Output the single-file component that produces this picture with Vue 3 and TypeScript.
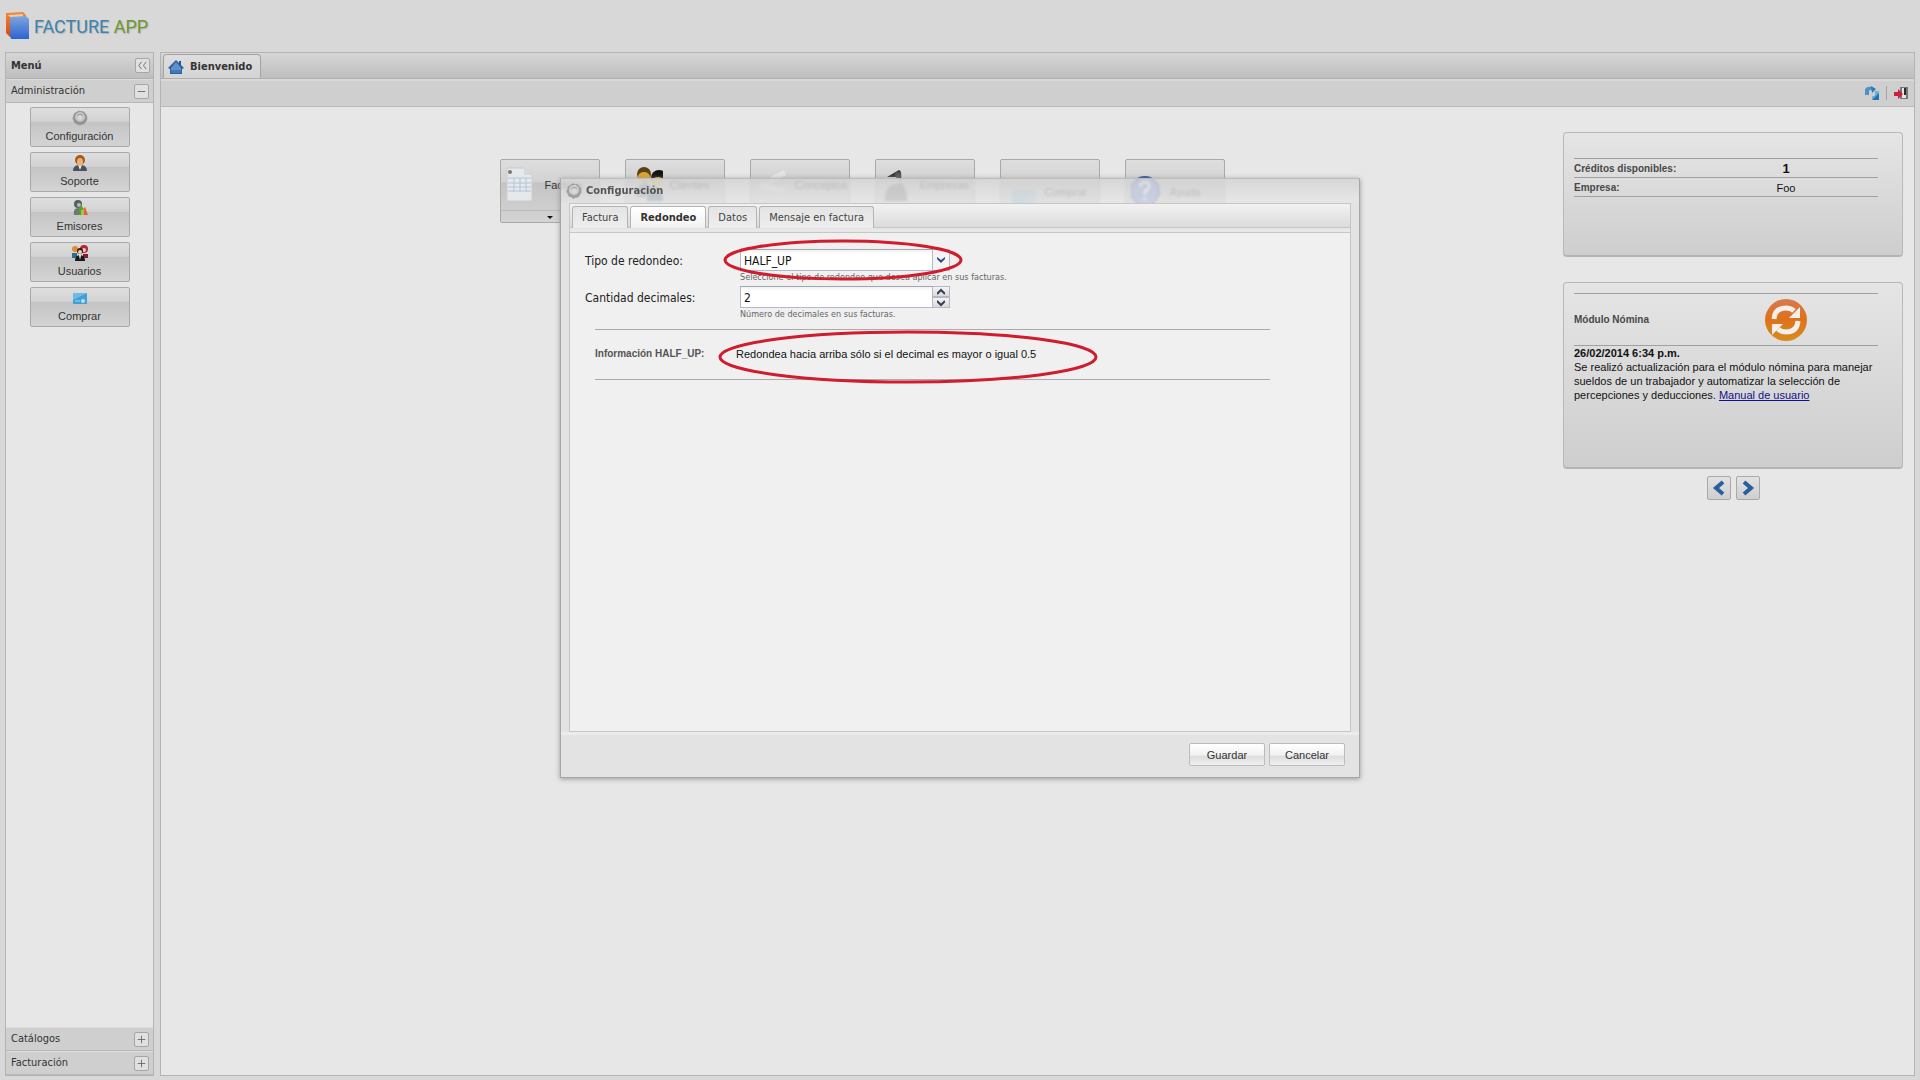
<script setup lang="ts">
import { ref } from 'vue'

interface MenuEntry { id: string; label: string }

const menu: MenuEntry[] = [
  { id: 'gear', label: 'Configuración' },
  { id: 'support', label: 'Soporte' },
  { id: 'issuer', label: 'Emisores' },
  { id: 'users', label: 'Usuarios' },
  { id: 'card', label: 'Comprar' },
]

const collapsed: string[] = ['Catálogos', 'Facturación']

const launchers: MenuEntry[] = [
  { id: 'invoice', label: 'Factura' },
  { id: 'clients', label: 'Clientes' },
  { id: 'concepts', label: 'Conceptos' },
  { id: 'company', label: 'Empresas' },
  { id: 'buy', label: 'Comprar' },
  { id: 'help', label: 'Ayuda' },
]

const tabs: string[] = ['Factura', 'Redondeo', 'Datos', 'Mensaje en factura']
const activeTab = ref<string>('Redondeo')
const rounding = ref<string>('HALF_UP')
const decimals = ref<number>(2)
</script>

<template>
  <div class="app">
    <header class="brand">
      <svg class="brand-mark" viewBox="0 0 24 30" aria-hidden="true">
        <defs>
          <linearGradient id="lo" x1="0" y1="0" x2="0" y2="1"><stop offset="0" stop-color="#f08a3c" /><stop offset="1" stop-color="#d8440e" /></linearGradient>
          <linearGradient id="lb" x1="0" y1="0" x2="0" y2="1"><stop offset="0" stop-color="#7fa6dc" /><stop offset="1" stop-color="#2d63d2" /></linearGradient>
        </defs>
        <path d="M0 2 L17 1 L20 4 L20 24 L4 26 L0 22 Z" fill="url(#lo)" />
        <path d="M2 4 L17 3 L17 6 L4 6 Z" fill="#f6c9a4" />
        <path d="M4 6 L20 5 L23 8 L23 28 L5 28 L4 24 Z" fill="url(#lb)" />
      </svg>
      <span class="brand-name"><span class="brand-a">FACTURE</span> <span class="brand-b">APP</span></span>
    </header>

    <div class="columns">
      <aside class="sidebar">
        <div class="side-head">
          <strong>Menú</strong>
          <button class="tool" aria-label="Contraer menú">
            <svg viewBox="0 0 14 14"><path d="M6 3 L3 7 L6 11 M11 3 L8 7 L11 11" /></svg>
          </button>
        </div>
        <div class="accordion">
          <span>Administración</span>
          <button class="tool" aria-label="Contraer Administración"><svg viewBox="0 0 14 14"><path d="M3 7 H11" /></svg></button>
        </div>
        <nav class="side-body">
          <button v-for="m in menu" :key="m.id" class="side-btn">
            <svg viewBox="0 0 16 16" aria-hidden="true">
              <g v-if="m.id === 'gear'">
                <circle cx="8" cy="8" r="5" fill="none" stroke="#929292" stroke-width="4" />
                <circle cx="8" cy="8" r="7" fill="none" stroke="#a2a2a2" stroke-width="1" stroke-dasharray="3 2" />
                <circle cx="8" cy="7" r="4" fill="none" stroke="#c6c6c6" stroke-width="2" />
              </g>
              <g v-else-if="m.id === 'support'">
                <path d="M1 16 Q1 11 6 10 L10 10 Q15 11 15 16 Z" fill="#4d4f5c" />
                <path d="M6 10 L8 15 L10 10 Z" fill="#f1e6da" />
                <circle cx="8" cy="5" r="5" fill="#a35a22" />
                <ellipse cx="8" cy="7" rx="3" ry="4" fill="#e9b183" />
              </g>
              <g v-else-if="m.id === 'issuer'">
                <circle cx="6" cy="4" r="4" fill="#56605f" />
                <path d="M2 15 Q1 8 6 8 Q11 8 11 15 Z" fill="#6d7775" />
                <circle cx="7" cy="5" r="2" fill="#b9bfbd" />
                <path d="M7 7 L9 5 L11 8 L11 15 L7 15 Z" fill="#4ca32b" />
                <path d="M11 9 L13 7 L16 15 L11 15 Z" fill="#e0603c" />
                <path d="M9 10 L12 9 L12 15 L9 15 Z" fill="#a8c43b" />
              </g>
              <g v-else-if="m.id === 'users'">
                <circle cx="3" cy="4" r="3" fill="#e58a2d" />
                <circle cx="12" cy="4" r="4" fill="#b5243a" />
                <circle cx="12" cy="5" r="2" fill="#f1c9ac" />
                <path d="M0 13 V8 H5 V13 Z" fill="#2b6f8f" />
                <path d="M11 13 V9 H16 V13 Z" fill="#7a2233" />
                <circle cx="8" cy="6" r="3" fill="#2a1b14" />
                <circle cx="8" cy="7" r="2" fill="#f3cfae" />
                <path d="M3 16 Q3 10 8 10 Q13 10 13 16 Z" fill="#17181b" />
                <path d="M7 10 H9 L8 15 Z" fill="#fff" />
              </g>
              <g v-else>
                <rect x="1" y="3" width="14" height="11" rx="1" fill="#3f9fd6" />
                <path d="M1 3 H15 L1 10 Z" fill="#6fbbe4" />
                <path d="M3 11 H8" stroke="#a6d8ef" />
                <circle cx="11" cy="11" r="2" fill="#bfe0ee" />
              </g>
            </svg>
            <span>{{ m.label }}</span>
          </button>
        </nav>
        <div v-for="c in collapsed" :key="c" class="accordion">
          <span>{{ c }}</span>
          <button class="tool" :aria-label="`Expandir ${c}`"><svg viewBox="0 0 14 14"><path d="M3 7 H11 M7 3 V11" /></svg></button>
        </div>
      </aside>

      <main class="main">
        <div class="main-tabs">
          <button class="main-tab">
            <svg viewBox="0 0 16 16" aria-hidden="true">
              <path d="M11 2 H13 V6 H11 Z" fill="#2d5688" />
              <path d="M8 1 L16 9 L14 10 V15 H2 V10 L0 9 Z" fill="#2f5f9c" />
              <path d="M8 3 L13 9 V14 H3 V9 Z" fill="#5d92cd" />
              <path d="M3 11 H13 V14 H3 Z" fill="#4179b8" />
            </svg>
            <span>Bienvenido</span>
          </button>
        </div>
        <div class="toolbar">
          <button class="icon-btn" aria-label="Actualizar">
            <svg viewBox="0 0 16 16">
              <path d="M1 10 V4 Q3 1 8 2 V5 Q5 4 5 7 V10 Z" fill="#4c94c8" />
              <path d="M7 1 L12 4 L8 8 Z" fill="#2f79b4" />
              <path d="M15 6 V12 Q12 15 8 14 V11 Q11 12 11 9 V6 Z" fill="#6cb0dc" />
              <path d="M15 8 V15 H8 Z" fill="#2674b4" />
            </svg>
          </button>
          <span class="divider"></span>
          <button class="icon-btn" aria-label="Salir">
            <svg viewBox="0 0 16 16">
              <path d="M7 2 H15 V14 H7 Z" fill="#77777b" />
              <path d="M9 3 H13 V13 H9 Z" fill="#e6e6e6" />
              <path d="M11 3 H13 V10 H11 Z" fill="#2c2c30" />
              <path d="M1 7 H5 V4 L10 9 L5 14 V11 H1 Z" fill="#cf1f33" />
            </svg>
          </button>
        </div>

        <div class="desk">
          <div class="launchers">
            <button v-for="l in launchers" :key="l.id" class="launch" :class="l.id">
              <span class="launch-main">
                <svg viewBox="0 0 32 36" aria-hidden="true">
                  <g v-if="l.id === 'invoice'">
                    <path d="M1 1 H18 L26 8 V34 H1 Z" fill="#e6e9ec" stroke="#c9ccd0" />
                    <path d="M18 1 V8 H26" fill="#d5d8dc" />
                    <circle cx="4" cy="5" r="2" fill="#777" />
                    <path d="M2 11 H25 M2 16 H25 M2 20 H25 M2 24 H25 M8 11 V25 M14 11 V25 M20 11 V25" stroke="#b4c4d8" />
                  </g>
                  <g v-else-if="l.id === 'clients'">
                    <circle cx="13" cy="7" r="7" fill="#5b4015" />
                    <ellipse cx="13" cy="10" rx="6" ry="5" fill="#d9a52c" />
                    <circle cx="28" cy="11" r="8" fill="#15120e" />
                    <ellipse cx="27" cy="15" rx="6" ry="5" fill="#e2b54c" />
                    <path d="M5 30 Q6 16 14 16 Q21 16 22 30 Z" fill="#77777a" />
                    <path d="M16 34 Q17 20 24 20 Q31 20 32 34 Z" fill="#3a5578" />
                  </g>
                  <g v-else-if="l.id === 'concepts'">
                    <path d="M1 16 L28 3 L30 8 L12 18 L30 22 L28 26 L6 22 Z" fill="#e4e4e4" />
                    <path d="M1 16 L14 10 L14 15 Z" fill="#bdbdbd" />
                  </g>
                  <g v-else-if="l.id === 'company'">
                    <path d="M6 10 L18 3 Q21 3 20 14 L15 10 Z" fill="#333" />
                    <circle cx="17" cy="8" r="3" fill="#565656" />
                    <path d="M4 34 Q3 22 11 18 L20 16 Q27 22 26 34 Z" fill="#6c6c6c" />
                  </g>
                  <g v-else-if="l.id === 'buy'">
                    <rect x="5" y="15" width="25" height="18" rx="3" fill="#9ab8ca" />
                    <rect x="8" y="18" width="11" height="12" fill="#7fb5d3" />
                  </g>
                  <g v-else>
                    <circle cx="14" cy="17" r="14" fill="#5c80e0" stroke="#2b4ea0" stroke-width="2" />
                    <path d="M9 13 Q10 8 14 8 Q19 9 18 13 Q17 16 14 17 V21 M14 24 V26" fill="none" stroke="#fff" stroke-width="3" />
                  </g>
                </svg>
                <span>{{ l.label }}</span>
              </span>
              <span v-if="l.id === 'invoice'" class="split"><i></i></span>
            </button>
          </div>

          <div class="widgets">
            <section class="card account">
              <table>
                <tbody>
                  <tr><th scope="row">Créditos disponibles:</th><td class="big">1</td></tr>
                  <tr><th scope="row">Empresa:</th><td>Foo</td></tr>
                </tbody>
              </table>
            </section>
            <section class="card news">
              <div class="news-head">
                <strong>Módulo Nómina</strong>
                <span>
                  <svg viewBox="0 0 42 42" aria-hidden="true">
                    <defs><linearGradient id="or" x1="0" y1="0" x2="0" y2="1"><stop offset="0" stop-color="#d8794f" /><stop offset="0.45" stop-color="#df701c" /><stop offset="1" stop-color="#d58d1e" /></linearGradient></defs>
                    <circle cx="21" cy="21" r="21" fill="url(#or)" />
                    <path d="M9 20 Q10 9 21 9 Q26 9 29 12" fill="none" stroke="#f3efeb" stroke-width="5" />
                    <path d="M35 8 V19 H24 Z" fill="#f3efeb" />
                    <path d="M33 22 Q32 33 21 33 Q16 33 13 30" fill="none" stroke="#f3efeb" stroke-width="5" />
                    <path d="M7 36 V25 H18 Z" fill="#f3efeb" />
                  </svg>
                </span>
              </div>
              <p><b>26/02/2014 6:34 p.m.</b><br />Se realizó actualización para el módulo nómina para manejar sueldos de un trabajador y automatizar la selección de percepciones y deducciones. <a href="#">Manual de usuario</a></p>
            </section>
            <div class="pager">
              <button aria-label="Anterior"><svg viewBox="0 0 16 16"><path d="M12 2 L5 8 L12 14" /></svg></button>
              <button aria-label="Siguiente"><svg viewBox="0 0 16 16"><path d="M4 2 L11 8 L4 14" /></svg></button>
            </div>
          </div>
        </div>
      </main>
    </div>

    <div class="dialog" role="dialog" aria-labelledby="dlg-title">
      <div class="dlg-head">
        <svg viewBox="0 0 16 16" aria-hidden="true">
          <circle cx="8" cy="8" r="5" fill="none" stroke="#a2a2a2" stroke-width="4" />
          <circle cx="8" cy="8" r="7" fill="none" stroke="#949494" stroke-width="1" stroke-dasharray="3 2" />
          <circle cx="8" cy="7" r="4" fill="none" stroke="#cfcfcf" stroke-width="2" />
        </svg>
        <span id="dlg-title">Configuración</span>
      </div>
      <div class="dlg-panel">
        <div class="dlg-tabs" role="tablist">
          <button v-for="t in tabs" :key="t" role="tab" :aria-selected="t === activeTab" :class="{ active: t === activeTab }" @click="activeTab = t">{{ t }}</button>
        </div>
        <div class="dlg-body">
          <div class="field">
            <label for="rounding">Tipo de redondeo:</label>
            <div>
              <div class="control">
                <select id="rounding" v-model="rounding"><option>HALF_UP</option></select>
                <span class="trigger"><svg viewBox="0 0 8 8"><path d="M0 1 L4 4 L8 1 V3 L4 7 L0 3 Z" fill="#2a4a86" /></svg></span>
              </div>
              <small>Seleccione el tipo de redondeo que desea aplicar en sus facturas.</small>
            </div>
          </div>
          <div class="field">
            <label for="decimals">Cantidad decimales:</label>
            <div>
              <div class="control">
                <input id="decimals" v-model="decimals" type="text" />
                <span class="spinner">
                  <button aria-label="Aumentar" @click="decimals++"><svg viewBox="0 0 8 8"><path d="M0 6 L4 2 L8 6" /></svg></button>
                  <button aria-label="Disminuir" @click="decimals--"><svg viewBox="0 0 8 8"><path d="M0 2 L4 6 L8 2" /></svg></button>
                </span>
              </div>
              <small>Número de decimales en sus facturas.</small>
            </div>
          </div>
          <div class="info">
            <strong>Información {{ rounding }}:</strong>
            <span>Redondea hacia arriba sólo si el decimal es mayor o igual 0.5</span>
          </div>
          <svg class="mark mark-field" viewBox="0 0 240 42" aria-hidden="true"><ellipse cx="120" cy="21" rx="118" ry="19" /></svg>
          <svg class="mark mark-info" viewBox="0 0 380 54" aria-hidden="true"><ellipse cx="190" cy="27" rx="188" ry="25" /></svg>
        </div>
      </div>
      <div class="dlg-foot">
        <button>Guardar</button>
        <button>Cancelar</button>
      </div>
    </div>
  </div>
</template>

<style>
body { background: #d8d8d8; }
</style>

<style scoped>
* { box-sizing: border-box; }
.app {
  position: relative;
  display: flex;
  flex-direction: column;
  min-height: 100vh;
  background: #d8d8d8;
  color: #333;
  font: 11px/14px "DejaVu Sans Condensed", "Noto Sans", sans-serif;
}
button { font: inherit; color: inherit; padding: 0; margin: 0; cursor: pointer; }
svg { display: block; flex: none; }

.brand { display: flex; align-items: center; gap: 4px; height: 52px; padding-left: 6px; }
.brand-mark { width: 24px; height: 30px; }
.brand-name { padding-top: 2px; font: 18px/24px Roboto, sans-serif; }
.brand-a { color: #3d83ae; text-shadow: 1px 1px 1px #b4b4b4; }
.brand-b { color: #6d9630; text-shadow: 1px 1px 1px #b4b4b4; }

.columns { flex: 1; display: grid; grid-template-columns: 149px minmax(0, 1fr); gap: 6px; padding: 0 5px 4px; }

.sidebar { display: flex; flex-direction: column; border: 1px solid #b4b4b4; background: #e7e7e7; }
.side-head { display: flex; align-items: center; justify-content: space-between; height: 26px; padding: 0 3px 0 5px; background: linear-gradient(#d6d6d6, #bebebe); border-bottom: 1px solid #b0b0b0; }
.accordion { display: flex; align-items: center; justify-content: space-between; height: 24px; padding: 0 4px 0 5px; background: #cfcfcf; border-top: 1px solid #dcdcdc; border-bottom: 1px solid #b8b8b8; }
.tool { width: 15px; height: 15px; border: 1px solid #a6a6a6; border-radius: 2px; background: #e0e0e0; }
.tool svg { width: 13px; height: 13px; }
.tool path { fill: none; stroke: #6a6a6a; stroke-width: 1; }
.side-body { flex: 1; display: flex; flex-direction: column; align-items: center; gap: 5px; padding-top: 4px; }
.side-btn, .launch {
  border: 1px solid #a9a9a9;
  border-radius: 2px;
  background: linear-gradient(#dedede 0, #d3d3d3 35%, #c4c4c4 37%, #d4d4d4 100%);
}
.side-btn { display: flex; flex-direction: column; align-items: center; width: 100px; height: 40px; padding-top: 2px; font: 11px/14px "Liberation Sans", Arial, sans-serif; }
.side-btn svg { width: 16px; height: 16px; margin-bottom: 3px; }

.main { display: flex; flex-direction: column; border: 1px solid #b4b4b4; background: #e7e7e7; }
.main-tabs { display: flex; align-items: flex-end; height: 26px; padding-left: 2px; background: linear-gradient(#d6d6d6, #bebebe); border-bottom: 1px solid #b0b0b0; }
.main-tab { display: flex; align-items: center; gap: 6px; width: 98px; height: 24px; padding-left: 4px; border: 1px solid #a4a4a4; border-bottom: 0; border-radius: 4px 4px 0 0; background: linear-gradient(#dedede, #d4d4d4); font-weight: bold; }
.main-tab svg { width: 16px; height: 16px; }
.toolbar { display: flex; align-items: center; justify-content: flex-end; gap: 6px; height: 28px; padding: 0 5px 2px 0; background: #cfcfcf; border-top: 2px solid #d9d9d9; border-bottom: 1px solid #b8b8b8; }
.icon-btn { border: 0; background: none; }
.icon-btn svg { width: 16px; height: 16px; }
.divider { width: 1px; height: 14px; background: #a6a6a6; }

.desk { flex: 1; display: flex; align-items: flex-start; padding: 25px 11px 24px 0; }
.launchers { flex: 1; display: flex; justify-content: center; align-items: flex-start; gap: 25px; padding-top: 27px; }
.launch { width: 100px; height: 52px; font: 11px/14px "Liberation Sans", Arial, sans-serif; }
.launch-main { display: flex; align-items: center; gap: 7px; height: 50px; padding-left: 5px; }
.launch-main svg { width: 32px; height: 36px; }
.launch.invoice, .launch.help, .launch.buy { height: 64px; }
.launch.help .launch-main, .launch.buy .launch-main { height: 64px; }
.split { display: flex; justify-content: center; align-items: center; height: 13px; border-top: 1px solid #bababa; }
.split i { border: 3px solid transparent; border-top-color: #111; border-bottom: 0; }

.widgets { width: 340px; }
.card { width: 340px; padding: 0 24px 0 10px; border: 1px solid #b8b8b8; border-bottom: 2px solid #b4b4b4; border-radius: 4px; background: linear-gradient(#e5e5e5, #cecece); color: #111; font: 11px/14px "Liberation Sans", Arial, sans-serif; }
.account { height: 125px; padding-top: 25px; }
.account table { width: 100%; border-collapse: collapse; }
.account tr { height: 19px; border-top: 1px solid #a0a0a0; border-bottom: 1px solid #a0a0a0; }
.account th { width: 120px; padding: 2px 0 0; text-align: left; white-space: nowrap; font-size: 10px; line-height: 14px; color: #484848; }
.account td { padding: 2px 0 0; text-align: center; }
.account .big { font-size: 13px; font-weight: bold; }
.news { height: 187px; margin-top: 25px; padding-top: 10px; }
.news-head { display: flex; align-items: center; height: 53px; border-top: 1px solid #a0a0a0; border-bottom: 1px solid #a0a0a0; }
.news-head strong { width: 120px; font-size: 10px; color: #484848; }
.news-head span { flex: 1; display: flex; justify-content: center; }
.news-head svg { width: 42px; height: 42px; }
.news p { margin: 0; }
.news a { color: #10108a; }
.pager { display: flex; justify-content: center; gap: 5px; margin-top: 7px; }
.pager button { display: flex; align-items: center; justify-content: center; width: 24px; height: 24px; border: 1px solid #a9a9a9; border-radius: 2px; background: linear-gradient(#e2e2e2, #cfcfcf); }
.pager svg { width: 16px; height: 16px; }
.pager path { fill: none; stroke: #2a5e9e; stroke-width: 4; }

.dialog { position: absolute; top: 178px; left: 0; right: 0; display: flex; flex-direction: column; width: 800px; min-height: 600px; margin: 0 auto; border: 1px solid #a6a6a6; border-top-color: #bdbdbd; box-shadow: 0 1px 5px #999; }
.dlg-head { display: flex; align-items: center; gap: 4px; height: 24px; padding-left: 5px; background: linear-gradient(rgba(212, 212, 212, 0.85), rgba(230, 230, 230, 0.8)); backdrop-filter: blur(1px); color: #555; font-weight: bold; }
.dlg-head svg { width: 16px; height: 16px; }
.dlg-panel { flex: 1; display: flex; flex-direction: column; border: solid #e3e3e3; border-width: 0 8px; background: #f0f0f0; }
.dlg-tabs { display: flex; align-items: flex-end; gap: 2px; height: 30px; padding: 0 2px 4px; border: 1px solid #c6c6c6; background: linear-gradient(#f2f2f2, #dcdcdc 80%, #c4c4c4 85%, #e8e8e8 88%); }
.dlg-tabs button { height: 22px; padding: 0 9px; border: 1px solid #b4b4b4; border-bottom: 0; border-radius: 3px 3px 0 0; background: linear-gradient(#e4e4e4, #eeeeee); color: #444; }
.dlg-tabs .active { background: linear-gradient(#fff, #f2f2f2); font-weight: bold; color: #333; }
.dlg-body { position: relative; flex: 1; padding: 16px 80px 0 15px; border: 1px solid #c6c6c6; border-top: 0; color: #222; }
.field { display: flex; height: 37px; font-size: 12px; }
.field label { width: 155px; padding-top: 5px; }
.field small { display: block; font-size: 9px; line-height: 12px; color: #666; }
.control { display: flex; width: 210px; height: 22px; }
.control select, .control input { appearance: none; flex: 1; min-width: 0; padding: 1px 3px 0; border: 1px solid #b5b8c8; border-top-color: #a2a6b0; border-radius: 0; outline: 0; background: linear-gradient(#f0f0f0, #fff 4px); color: #111; font: inherit; }
.trigger { display: flex; align-items: center; justify-content: center; width: 17px; border: 1px solid #b5b8c8; border-left: 0; background: #f4f4f4; }
.trigger svg { width: 8px; height: 8px; }
.spinner { display: flex; flex-direction: column; width: 17px; }
.spinner button { flex: 1; display: flex; align-items: center; justify-content: center; border: 1px solid #b5b8c8; border-left: 0; background: linear-gradient(#f4f4f4, #dadada); }
.spinner svg { width: 8px; height: 8px; }
.spinner path { fill: none; stroke: #3a3f50; stroke-width: 2; }
.info { display: flex; align-items: center; height: 51px; margin: 6px 0 0 10px; padding-bottom: 1px; border-top: 1px solid #aaa; border-bottom: 1px solid #aaa; color: #111; font: 11px/14px "Liberation Sans", Arial, sans-serif; }
.info strong { width: 141px; font-size: 10px; color: #555; }
.mark { position: absolute; overflow: visible; pointer-events: none; }
.mark ellipse { fill: none; stroke: #d01c2c; stroke-width: 3; }
.mark-field { top: 6px; left: 153px; width: 240px; height: 42px; }
.mark-info { top: 97px; left: 148px; width: 380px; height: 54px; }
.dlg-foot { display: flex; justify-content: flex-end; gap: 4px; height: 45px; padding: 8px 14px 0; border-top: 3px solid #ececec; background: #e3e3e3; }
.dlg-foot button { width: 76px; height: 23px; border: 1px solid #bcbcbc; border-radius: 2px; background: linear-gradient(#fff 0, #f2f2f2 50%, #dedede 60%, #f0f0f0 100%); font: 11px/14px "Liberation Sans", Arial, sans-serif; }
</style>
